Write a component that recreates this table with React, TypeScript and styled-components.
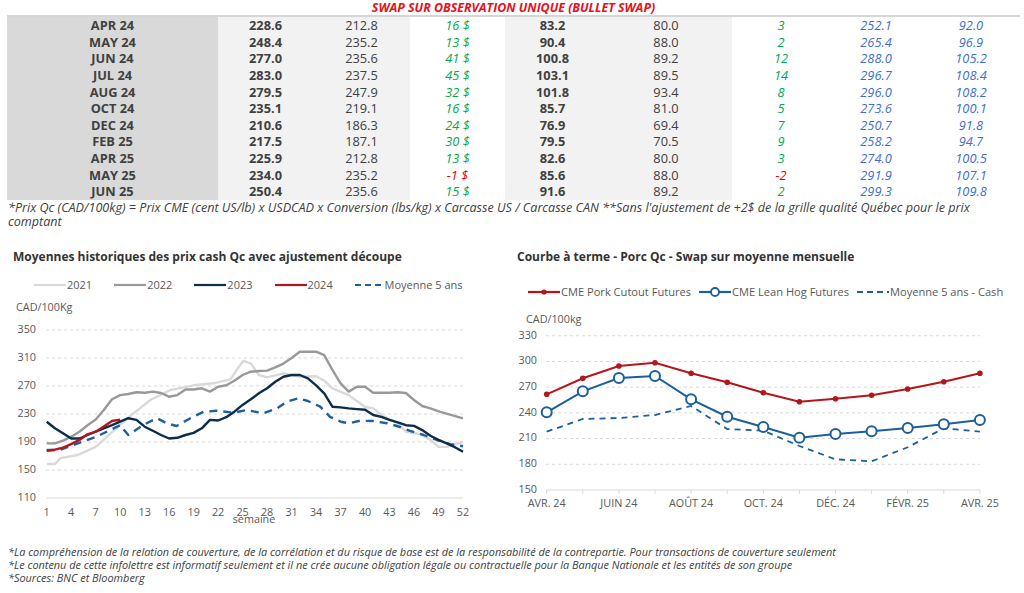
import React from "react";
import styled, { createGlobalStyle } from "styled-components";

const FONT = `"Open Sans", "DejaVu Sans", sans-serif`;

const Global = createGlobalStyle`
  html, body { margin: 0; padding: 0; background: #ffffff; }
  body { font-family: ${FONT}; color: #404040; }
`;

const Page = styled.div`
  width: 1024px;
  height: 593px;
  overflow: hidden;
  box-sizing: border-box;
  display: flex;
  flex-direction: column;
  background: #fff;
`;

const TopBlock = styled.section`
  padding-left: 7px;
  width: 1013px;
`;

const SwapTitle = styled.div`
  height: 15px;
  line-height: 15px;
  text-align: center;
  font-weight: 700;
  font-style: italic;
  font-size: 12.4px;
  color: #e8101a;
  border-bottom: 2px solid #d6d6d6;
  white-space: nowrap;
`;

const Grid = styled.div`
  display: grid;
  grid-template-columns: 211px 95px 97px 95px 95px 132px 98px 92px 98px;
  grid-auto-rows: 16.64px;
`;

const Cell = styled.div<{ $bg: string; $weight: number; $italic: boolean; $color: string }>`
  background: ${(p) => p.$bg};
  font-weight: ${(p) => p.$weight};
  font-style: ${(p) => (p.$italic ? "italic" : "normal")};
  color: ${(p) => p.$color};
  font-size: 12.8px;
  line-height: 16.64px;
  text-align: center;
  white-space: nowrap;
`;

const Footnote = styled.p`
  margin: 1px 0 0 8px;
  width: 980px;
  font-size: 12.6px;
  line-height: 14px;
  font-style: italic;
  color: #404040;
`;

const ChartsRow = styled.section`
  margin-top: 20px;
  display: flex;
  height: 279px;
`;

const Panel = styled.div<{ $w: number; $pad: number }>`
  width: ${(p) => p.$w}px;
  padding-left: ${(p) => p.$pad}px;
  box-sizing: border-box;
  display: flex;
  flex-direction: column;
`;

const ChartTitle = styled.div`
  font-weight: 700;
  font-size: 12px;
  line-height: 16px;
  color: #333;
  white-space: nowrap;
`;

const Legend = styled.div<{ $top: number; $left: number; $gap: number }>`
  margin-top: ${(p) => p.$top}px;
  margin-left: ${(p) => p.$left}px;
  display: flex;
  align-items: center;
  gap: ${(p) => p.$gap}px;
  height: 14px;
`;

const LegendItem = styled.div<{ $size: number }>`
  display: flex;
  align-items: center;
  gap: 1px;
  font-size: ${(p) => p.$size}px;
  color: #595959;
  white-space: nowrap;
`;

const Plot = styled.svg<{ $ml: number }>`
  display: block;
  margin-left: ${(p) => p.$ml}px;
  overflow: visible;
  font-family: ${FONT};
`;

const Footer = styled.footer`
  margin: 17px 0 0 8px;
  font-size: 10.9px;
  line-height: 13px;
  font-style: italic;
  color: #404040;
`;

const GREEN = "#00a84f";
const RED = "#e60000";
const BLUE = "#3c6ed0";
const TXT = "#404040";

type Col = { bg: string; weight: number; italic: boolean; color: string };
const cols: Col[] = [
  { bg: "#d9d9d9", weight: 700, italic: false, color: TXT },
  { bg: "#f2f2f2", weight: 700, italic: false, color: TXT },
  { bg: "#f2f2f2", weight: 400, italic: false, color: TXT },
  { bg: "#ffffff", weight: 400, italic: true, color: GREEN },
  { bg: "#f2f2f2", weight: 700, italic: false, color: TXT },
  { bg: "#f2f2f2", weight: 400, italic: false, color: TXT },
  { bg: "#ffffff", weight: 400, italic: true, color: GREEN },
  { bg: "#ffffff", weight: 400, italic: true, color: BLUE },
  { bg: "#ffffff", weight: 400, italic: true, color: BLUE },
];

const rows: string[][] = [
  ["APR 24", "228.6", "212.8", "16 $", "83.2", "80.0", "3", "252.1", "92.0"],
  ["MAY 24", "248.4", "235.2", "13 $", "90.4", "88.0", "2", "265.4", "96.9"],
  ["JUN 24", "277.0", "235.6", "41 $", "100.8", "89.2", "12", "288.0", "105.2"],
  ["JUL 24", "283.0", "237.5", "45 $", "103.1", "89.5", "14", "296.7", "108.4"],
  ["AUG 24", "279.5", "247.9", "32 $", "101.8", "93.4", "8", "296.0", "108.2"],
  ["OCT 24", "235.1", "219.1", "16 $", "85.7", "81.0", "5", "273.6", "100.1"],
  ["DEC 24", "210.6", "186.3", "24 $", "76.9", "69.4", "7", "250.7", "91.8"],
  ["FEB 25", "217.5", "187.1", "30 $", "79.5", "70.5", "9", "258.2", "94.7"],
  ["APR 25", "225.9", "212.8", "13 $", "82.6", "80.0", "3", "274.0", "100.5"],
  ["MAY 25", "234.0", "235.2", "-1 $", "85.6", "88.0", "-2", "291.9", "107.1"],
  ["JUN 25", "250.4", "235.6", "15 $", "91.6", "89.2", "2", "299.3", "109.8"],
];

/* ---------- Left chart data ---------- */
type Pt = [number, number];
const s2021: Pt[] = [[1,158.6],[2,158.6],[2.7,167],[4.8,171.4],[7,183],[8.4,197.6],[11.2,227],[13.7,250],[16.1,264],[19,271],[21.4,273.8],[23.5,279.5],[24.4,295],[25.1,306],[26,302],[27,285.7],[28,282.4],[30,288],[32,283.3],[34,284],[35,277.6],[36,266.7],[38,257],[40,240],[41,238],[42,228.6],[44,216.7],[45,204.7],[46.8,201],[48,193],[49,183],[50,183],[52,190]];
const s2022: Pt[] = [[1,188],[2,188],[3,192],[4,197.6],[5,204.7],[6,214],[7,222],[8,235.7],[9,251],[10,257],[11,258.6],[12,261],[13,260.5],[14,262],[15,260],[16,254.7],[17,257],[18,265],[19,265],[20,266.7],[21,262],[22,269],[23,271],[24,277.6],[25,285.7],[26,290.4],[27,291.4],[28,292],[29,296.7],[30,302],[31,310],[32,319],[34,319],[35,314],[36,293],[37,273.8],[38,262],[39,269],[40,269],[41,260.5],[43,260.5],[44,261],[45,260],[46,250],[47,241.4],[48,238],[49.2,233],[50.4,229],[52,223.8]];
const s2023: Pt[] = [[1,219],[2,209.6],[3,202.4],[4,195],[5,195],[6,200],[7,204.7],[8,209.6],[9,214],[10,219],[11,224],[12,221.6],[13,211.9],[14,206],[15,200],[16,195],[17,196],[18,200],[19,203],[20,209.6],[21,221.6],[22,220.7],[23,225.5],[24,233.3],[25,243],[26,251],[27,259.6],[28,266.7],[29,276],[30,283.3],[31,285.7],[32,285.7],[33,281],[34,271],[35,259.6],[36,240.5],[37,239.5],[38,238],[39,237],[40,236],[41,228.6],[42,226],[43,221.6],[44,218],[45,214],[46,213],[47,207],[48,199],[49,193],[50,188],[51,182.6],[52,176]];
const s2024: Pt[] = [[1,177.6],[2,179],[3,182],[4,187],[5,193],[6,201],[7,204.7],[8,212],[9,220],[10,222]];
const sAvg: Pt[] = [[1,178.6],[2.6,178.6],[4.3,186],[7.1,197.6],[10,214],[11,200],[12.8,214],[14.5,224],[15.7,216.7],[16.9,212.9],[18.6,224],[20.2,233],[21.8,234.7],[23.9,231.9],[25.5,235.7],[27.5,231],[29.2,238],[30.4,247.6],[31.8,252.4],[33,248.6],[34.5,240.4],[35.7,226],[37,219],[38,216.7],[39.4,220.4],[41,220],[42.7,216.7],[43.9,212.9],[45.5,206],[47.2,200],[48.8,192.9],[50.4,187],[52,184]];

const lx = (w: number) => 46.7 + (w - 1) * 8.163;
const ly = (v: number) => 206 - (v - 110) * 0.7;
const lpath = (pts: Pt[]) => pts.map(([w, v]) => `${lx(w).toFixed(1)},${ly(v).toFixed(1)}`).join(" ");

/* ---------- Right chart data ---------- */
const cutout = [261.7, 280.3, 294.7, 298.5, 286.2, 275.7, 263.5, 253, 256.5, 260.5, 267.9, 276.4, 286.2];
const leanHog = [240.7, 265.2, 280.7, 283, 255.8, 235.5, 223.5, 211, 215.3, 218.5, 222.3, 226.7, 231.7];
const avgCash = [218, 232.8, 234, 237.5, 248, 221.2, 219.2, 201.3, 185.8, 183.5, 199.8, 222, 218];
const rx = (i: number) => 41.7 + i * 36.1;
const ry = (v: number) => 191 - (v - 150) * 0.857;
const rpath = (vals: number[]) => vals.map((v, i) => `${rx(i).toFixed(1)},${ry(v).toFixed(1)}`).join(" ");

const AXIS = "#595959";
const GRID = "#d9d9d9";
const C2021 = "#d9d9d9";
const C2022 = "#999999";
const C2023 = "#0c2d4c";
const C2024 = "#b3161c";
const CAVG = "#1f5f9c";
const CRED = "#b5161c";
const CBLUE = "#1c5f9b";
const FS = 10.8;

const Swatch: React.FC<{ color: string; dash?: boolean; marker?: "dot" | "ring"; w?: number }> = ({ color, dash, marker, w = 32 }) => (
  <svg width={w} height={12} viewBox={`0 0 ${w} 12`}>
    <line x1={0} y1={6} x2={w} y2={6} stroke={color} strokeWidth={2.2} strokeDasharray={dash ? "6 4" : undefined} />
    {marker === "dot" && <circle cx={w / 2} cy={6} r={2.6} fill={color} />}
    {marker === "ring" && <circle cx={w / 2} cy={6} r={4} fill="#fff" stroke={color} strokeWidth={1.8} />}
  </svg>
);

const LeftChart: React.FC = () => {
  const yTicks = [350, 310, 270, 230, 190, 150];
  const xTicks = Array.from({ length: 18 }, (_, i) => 1 + i * 3);
  return (
    <Plot $ml={-13} width={505} height={236} viewBox="0 0 505 236">
      <text x={16} y={16} fontSize={FS} fill={AXIS} dominantBaseline="middle">CAD/100Kg</text>
      {yTicks.map((v) => (
        <g key={v}>
          <line x1={46} x2={463} y1={ly(v)} y2={ly(v)} stroke={GRID} strokeDasharray="3 3" strokeWidth={1} />
          <text x={36} y={ly(v)} fontSize={FS} fill={AXIS} textAnchor="end" dominantBaseline="middle">{v}</text>
        </g>
      ))}
      <line x1={46} x2={463} y1={ly(110)} y2={ly(110)} stroke={GRID} strokeWidth={1} />
      <text x={36} y={ly(110)} fontSize={FS} fill={AXIS} textAnchor="end" dominantBaseline="middle">110</text>
      {xTicks.map((w) => (
        <text key={w} x={lx(w)} y={221} fontSize={FS} fill={AXIS} textAnchor="middle" dominantBaseline="middle">{w}</text>
      ))}
      <text x={254} y={228} fontSize={FS} fill={AXIS} textAnchor="middle" dominantBaseline="middle">semaine</text>
      <polyline points={lpath(s2021)} fill="none" stroke={C2021} strokeWidth={2.4} strokeLinejoin="round" />
      <polyline points={lpath(s2022)} fill="none" stroke={C2022} strokeWidth={2.4} strokeLinejoin="round" />
      <polyline points={lpath(sAvg)} fill="none" stroke={CAVG} strokeWidth={2.4} strokeDasharray="8 6" strokeLinejoin="round" />
      <polyline points={lpath(s2023)} fill="none" stroke={C2023} strokeWidth={2.4} strokeLinejoin="round" />
      <polyline points={lpath(s2024)} fill="none" stroke={C2024} strokeWidth={2.4} strokeLinejoin="round" />
    </Plot>
  );
};

const RightChart: React.FC = () => {
  const yTicks = [330, 300, 270, 240, 210, 180];
  const labels = ["AVR. 24", "JUIN 24", "AOÛT 24", "OCT. 24", "DÉC. 24", "FÉVR. 25", "AVR. 25"];
  return (
    <Plot $ml={-12} width={519} height={229} viewBox="0 0 519 229">
      <text x={21} y={21.5} fontSize={FS} fill={AXIS} dominantBaseline="middle">CAD/100kg</text>
      {yTicks.map((v) => (
        <g key={v}>
          <line x1={41} x2={475} y1={ry(v)} y2={ry(v)} stroke={GRID} strokeDasharray="3 3" strokeWidth={1} />
          <text x={32} y={ry(v)} fontSize={FS} fill={AXIS} textAnchor="end" dominantBaseline="middle">{v}</text>
        </g>
      ))}
      <line x1={41} x2={475} y1={ry(150)} y2={ry(150)} stroke={GRID} strokeWidth={1} />
      <text x={32} y={ry(150)} fontSize={FS} fill={AXIS} textAnchor="end" dominantBaseline="middle">150</text>
      {cutout.map((_, i) => (
        <line key={i} x1={rx(i)} x2={rx(i)} y1={ry(150)} y2={ry(150) + 4} stroke={GRID} strokeWidth={1} />
      ))}
      {labels.map((t, i) => (
        <text key={t} x={rx(i * 2)} y={205} fontSize={FS} fill={AXIS} textAnchor="middle" dominantBaseline="middle">{t}</text>
      ))}
      <polyline points={rpath(avgCash)} fill="none" stroke={CBLUE} strokeWidth={1.8} strokeDasharray="6 5" />
      <polyline points={rpath(cutout)} fill="none" stroke={CRED} strokeWidth={2} />
      {cutout.map((v, i) => (
        <circle key={i} cx={rx(i)} cy={ry(v)} r={2.8} fill={CRED} />
      ))}
      <polyline points={rpath(leanHog)} fill="none" stroke={CBLUE} strokeWidth={2} />
      {leanHog.map((v, i) => (
        <circle key={i} cx={rx(i)} cy={ry(v)} r={5} fill="#fff" stroke={CBLUE} strokeWidth={2} />
      ))}
    </Plot>
  );
};

export default function App() {
  return (
    <Page>
      <Global />
      <TopBlock>
        <SwapTitle>SWAP SUR OBSERVATION UNIQUE (BULLET SWAP)</SwapTitle>
        <Grid>
          {rows.map((r, ri) =>
            r.map((val, ci) => {
              const c = cols[ci];
              const neg = val.startsWith("-");
              return (
                <Cell key={`${ri}-${ci}`} $bg={c.bg} $weight={c.weight} $italic={c.italic} $color={neg ? RED : c.color}>
                  {val}
                </Cell>
              );
            })
          )}
        </Grid>
      </TopBlock>
      <Footnote>
        *Prix Qc (CAD/100kg) = Prix CME (cent US/lb) x USDCAD x Conversion (lbs/kg) x Carcasse US / Carcasse CAN **Sans l'ajustement de +2$ de la grille qualité Québec pour le prix comptant
      </Footnote>
      <ChartsRow>
        <Panel $w={505} $pad={13}>
          <ChartTitle>Moyennes historiques des prix cash Qc avec ajustement découpe</ChartTitle>
          <Legend $top={13} $left={21} $gap={22}>
            <LegendItem $size={11}><Swatch color={C2021} />2021</LegendItem>
            <LegendItem $size={11}><Swatch color={C2022} />2022</LegendItem>
            <LegendItem $size={11}><Swatch color={C2023} />2023</LegendItem>
            <LegendItem $size={11}><Swatch color={C2024} />2024</LegendItem>
            <LegendItem $size={11}><Swatch color={CAVG} dash w={26} />&nbsp;Moyenne 5 ans</LegendItem>
          </Legend>
          <LeftChart />
        </Panel>
        <Panel $w={519} $pad={12}>
          <ChartTitle>Courbe à terme - Porc Qc - Swap sur moyenne mensuelle</ChartTitle>
          <Legend $top={20} $left={11} $gap={8}>
            <LegendItem $size={11.1}><Swatch color={CRED} marker="dot" />CME Pork Cutout Futures</LegendItem>
            <LegendItem $size={11.1}><Swatch color={CBLUE} marker="ring" />CME Lean Hog Futures</LegendItem>
            <LegendItem $size={11.1}><Swatch color={CBLUE} dash />Moyenne 5 ans - Cash</LegendItem>
          </Legend>
          <RightChart />
        </Panel>
      </ChartsRow>
      <Footer>
        *La compréhension de la relation de couverture, de la corrélation et du risque de base est de la responsabilité de la contrepartie. Pour transactions de couverture seulement
        <br />
        *Le contenu de cette infolettre est informatif seulement et il ne crée aucune obligation légale ou contractuelle pour la Banque Nationale et les entités de son groupe
        <br />
        *Sources: BNC et Bloomberg
      </Footer>
    </Page>
  );
}
